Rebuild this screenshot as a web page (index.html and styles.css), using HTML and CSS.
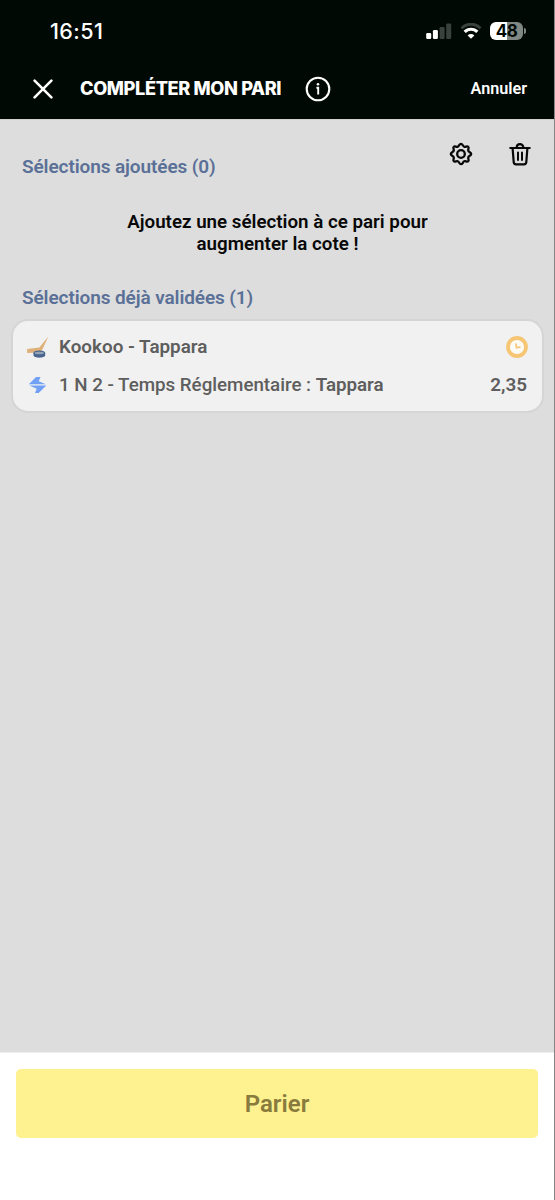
FILE: index.html
```html
<!DOCTYPE html>
<html lang="fr">
<head>
<meta charset="utf-8">
<title>Compléter mon pari</title>
<link rel="stylesheet" href="styles.css">
</head>
<body>
<div class="screen">
  <header class="top">
    <div class="status">
      <span class="time">16:51</span>
      <div class="indicators">
        <svg class="signal" width="26" height="16" viewBox="0 0 26 16">
          <rect x="0.2" y="10" width="5" height="6" rx="1.3" fill="#fff"/>
          <rect x="6.9" y="7" width="5" height="9" rx="1.3" fill="#fff"/>
          <rect x="13.6" y="4" width="5" height="12" rx="1.3" fill="#3a423d"/>
          <rect x="20.2" y="0.5" width="5" height="15.5" rx="1.3" fill="#3a423d"/>
        </svg>
        <svg class="wifi" width="22" height="16" viewBox="0 0 22 16">
          <path d="M1.5 5.2A13.3 13.3 0 0 1 20.5 5.2" fill="none" stroke="#3a423d" stroke-width="3"/>
          <path d="M4.7 8.9A8.8 8.8 0 0 1 17.3 8.9" fill="none" stroke="#fff" stroke-width="3.2"/>
          <path d="M7.7 12.4A4.6 4.6 0 0 1 14.3 12.4L11 15.8Z" fill="#fff"/>
        </svg>
        <div class="battery"><span class="cell">48</span><span class="cap"></span></div>
      </div>
    </div>
    <div class="nav">
      <svg class="close" width="20" height="20" viewBox="0 0 20 20"><path d="M1.6 1.6 18.4 18.4M18.4 1.6 1.6 18.4" fill="none" stroke="#fff" stroke-width="2.6" stroke-linecap="round"/></svg>
      <h1 class="title">COMPLÉTER MON PARI</h1>
      <svg class="info" width="26" height="26" viewBox="0 0 26 26"><circle cx="13" cy="13" r="11.3" fill="none" stroke="#fff" stroke-width="2.1"/><circle cx="13" cy="8.2" r="1.3" fill="#fff"/><path d="M11.4 11.7H13.2V18.6" fill="none" stroke="#fff" stroke-width="1.9"/></svg>
      <span class="cancel">Annuler</span>
    </div>
  </header>
  <main class="content">
    <div class="section-row">
      <h2 class="section">Sélections ajoutées (0)</h2>
      <div class="tools">
        <svg width="24" height="24" viewBox="0 0 24 24" fill="none" stroke="#080808" stroke-width="2.3" stroke-linejoin="round"><path d="M12 1.8C13.7 1.8 13.7 4.1 15.2 4.7S17.9 3.5 19.2 4.8 18.6 7.3 19.3 8.8 22.2 10.3 22.2 12 19.9 13.7 19.3 15.2 20.5 17.9 19.2 19.2 16.7 18.6 15.2 19.3 13.7 22.2 12 22.2 10.3 19.9 8.8 19.3 6.1 20.5 4.8 19.2 5.4 16.7 4.7 15.2 1.8 13.7 1.8 12 4.1 10.3 4.7 8.8 3.5 6.1 4.8 4.8 7.3 5.4 8.8 4.7 10.3 1.8 12 1.8Z"/><circle cx="12" cy="12" r="3.8"/></svg>
        <svg width="22" height="24" viewBox="0 0 22 24" fill="none" stroke="#080808" stroke-width="2.2" stroke-linecap="round" stroke-linejoin="round"><path d="M1.3 6H20.7M7.6 5.7C7.6 .9 14.4 .9 14.4 5.7M3.6 6.2 4.7 20.2C4.8 21.6 5.5 22.3 6.9 22.3H15.1C16.5 22.3 17.2 21.6 17.3 20.2L18.4 6.2"/><path d="M9 10.5V18M13 10.5V18" stroke-width="2"/></svg>
      </div>
    </div>
    <p class="hint">Ajoutez une sélection à ce pari pour<br>augmenter la cote !</p>
    <h2 class="section validated">Sélections déjà validées (1)</h2>
    <article class="card">
      <div class="line match">
        <svg class="lead" width="23" height="22" viewBox="0 0 23 22"><path d="M21.3 .4 14.6 15.2Q14 16.4 12.4 16.4L.1 16.9V13L12.3 11.6Z" fill="#dfb17a"/><path d="M6.5 16.9V19.3C6.5 22.4 18.2 22.4 18.2 19.3V16.9Z" fill="#49658f"/><ellipse cx="12.3" cy="17" rx="5.3" ry="1.9" fill="#93a4b8" stroke="#49658f" stroke-width="1.2"/></svg>
        <span class="teams">Kookoo - Tappara</span>
        <svg class="clock" width="22" height="22" viewBox="0 0 22 22"><circle cx="11" cy="11" r="9" fill="#fcfaf5" stroke="#f6c675" stroke-width="3.8"/><path d="M9.8 7.4 10.6 11.7 14.6 11" fill="none" stroke="#f6c675" stroke-width="1.7"/></svg>
      </div>
      <div class="line pick">
        <svg class="lead" width="23" height="18" viewBox="0 0 23 18"><path d="M1.8 8.3 9 1.1H13.5L11.7 5.3 18.8 8.3Z" fill="#71a0f6"/><path d="M19.3 9.4 11.7 17H8L9.7 12.7 2.4 9.4Z" fill="#71a0f6"/></svg>
        <span class="market">1 N 2 - Temps Réglementaire : <b>Tappara</b></span>
        <span class="odds">2,35</span>
      </div>
    </article>
  </main>
  <footer class="footer"><button class="bet">Parier</button></footer>
</div>
</body>
</html>
```
FILE: styles.css
```css
* { box-sizing: border-box; }
body { margin: 0; background: #fff; font-family: Roboto, sans-serif; }
.screen { width: 555px; height: 1200px; display: flex; flex-direction: column; border-right: 1px solid #858585; background: #ddd; overflow: hidden; }
.top { height: 119px; flex: none; background: #010904; color: #fff; }
.status { height: 60px; display: flex; align-items: center; justify-content: space-between; padding: 1px 28px 0 50px; }
.time { font: 500 21.5px/26px Inter, sans-serif; letter-spacing: .4px; }
.indicators { display: flex; align-items: center; }
.wifi { margin-left: 8px; }
.battery { display: flex; align-items: center; gap: 1px; margin-left: 8px; }
.cell { width: 33px; height: 18px; border-radius: 6px; background: linear-gradient(90deg, #fff 50%, #818883 50%); color: #010904; font: 700 17px/18px Inter, sans-serif; letter-spacing: -.6px; text-align: center; }
.cap { width: 2px; height: 6px; border-radius: 0 3px 3px 0; background: #818883; }
.nav { height: 57px; display: flex; align-items: center; padding: 0 27px 0 33px; }
.title { margin: -1px 0 0 27px; width: 203px; white-space: nowrap; font: 800 18.2px/24px Inter, sans-serif; letter-spacing: -.38px; }
.info { margin-left: 22px; }
.cancel { margin-left: auto; font-weight: 600; font-size: 16.2px; }
.content { flex: 1; background: #ddd; padding: 20px 10px 0 11px; border-top: 1px solid #d0d0d0; }
.section-row { display: flex; justify-content: space-between; padding: 0 11px; }
.section { margin: 0; font-size: 19px; font-weight: 600; line-height: 24px; letter-spacing: -.1px; color: #5a7097; white-space: nowrap; }
.section-row .section { margin-top: 15px; }
.tools { display: flex; gap: 36px; margin: 2px 2px 0 0; }
.hint { margin: 32px 0 0; text-align: center; font-size: 18.75px; line-height: 22px; font-weight: 600; color: #080808; }
.validated { margin: 31px 0 0 11px; }
.card { margin-top: 9px; height: 94px; border: 2px solid #d5d5d5; border-radius: 17px; background: #f1f1f1; padding: 13px 14px 0; color: #5e5e5e; }
.line { display: flex; align-items: center; height: 26px; font-size: 18.85px; white-space: nowrap; }
.pick { margin-top: 12px; padding-right: 1px; }
.market { font-weight: 500; font-size: 18.75px; letter-spacing: -.01px; }
.lead { margin-right: 9px; flex: none; }
.teams, .odds, .market b { font-weight: 600; }
.clock, .odds { margin-left: auto; }
.footer { height: 148px; flex: none; background: #fff; border-top: 1px solid #eee; padding: 16px 16px 0 16px; }
.bet { display: block; width: 100%; height: 69px; padding: 0; border: 0; border-radius: 5px; background: #fef18f; color: #887b3d; font: 600 24px/70px Roboto, sans-serif; }
```
